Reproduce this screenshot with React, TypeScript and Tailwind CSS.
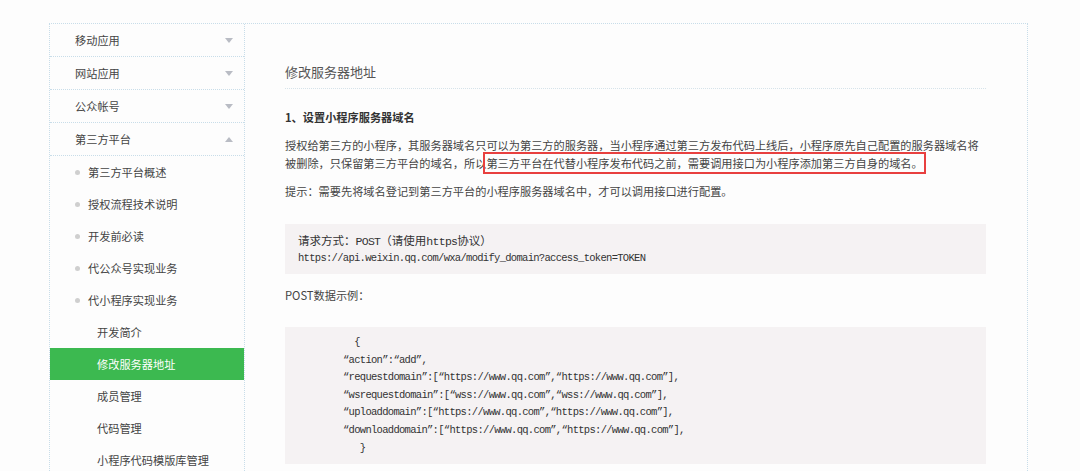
const font = { fontFamily: '"Noto Sans CJK SC", "Noto Sans", sans-serif' }

function Chevron({ up }: { up?: boolean }) {
  return (
    <svg width="8" height="5" viewBox="0 0 8 5" className="text-[#b9bcc4]">
      {up ? <path d="M0 5 L4 0 L8 5 Z" fill="currentColor" /> : <path d="M0 0 L8 0 L4 5 Z" fill="currentColor" />}
    </svg>
  )
}

const topItems = ["移动应用", "网站应用", "公众帐号"]
const subItems = ["第三方平台概述", "授权流程技术说明", "开发前必读", "代公众号实现业务", "代小程序实现业务"]
const nested = ["开发简介", "修改服务器地址", "成员管理", "代码管理", "小程序代码模版库管理"]

const codeLines = [
  "  {",
  "“action”:“add”,",
  "“requestdomain”:[“https://www.qq.com”,“https://www.qq.com”],",
  "“wsrequestdomain”:[“wss://www.qq.com”,“wss://www.qq.com”],",
  "“uploaddomain”:[“https://www.qq.com”,“https://www.qq.com”],",
  "“downloaddomain”:[“https://www.qq.com”,“https://www.qq.com”],",
  "   }",
]

function Sidebar() {
  return (
    <div className="w-[196px] shrink-0 border-x border-dotted border-[#c8dde9] text-[11.2px] text-[#444]">
      {topItems.map((t) => (
        <div key={t} className="flex h-[33px] items-center justify-between border-b border-dotted border-[#c8dde9] pl-[25px] pr-[11px]">
          <span>{t}</span>
          <Chevron />
        </div>
      ))}
      <div className="flex h-[33px] items-center justify-between border-b border-dotted border-[#c8dde9] pl-[25px] pr-[11px]">
        <span>第三方平台</span>
        <Chevron up />
      </div>
      {subItems.map((t) => (
        <div key={t} className="flex h-8 items-center gap-2 pl-[25px]">
          <span className="h-[5px] w-[5px] rounded-full bg-[#cfcfcf]" />
          <span>{t}</span>
        </div>
      ))}
      {nested.map((t) => (
        <div
          key={t}
          className={
            t === "修改服务器地址"
              ? "flex h-8 items-center bg-[#3cb950] pl-[47px] text-white"
              : "flex h-8 items-center pl-[47px]"
          }
        >
          {t}
        </div>
      ))}
    </div>
  )
}

function Main() {
  return (
    <div className="flex-1 pl-10 pr-[41px] pt-[38px] text-[11.2px] text-[#444]">
      <div className="border-b border-dotted border-[#d6e3ea] pb-[6px]">
        <h1 className="text-[13px] leading-5 text-[#555]">修改服务器地址</h1>
      </div>
      <h2 className="mt-[19px] font-bold leading-[18px] text-[#333]">1、设置小程序服务器域名</h2>
      <p className="mt-[10px] leading-[18px]">
        授权给第三方的小程序，其服务器域名只可以为第三方的服务器，当小程序通过第三方发布代码上线后，小程序原先自己配置的服务器域名将被删除，只保留第三方平台的域名，所以
        <span className="outline-2 outline-[#e8403f] outline-offset-[1px]">
          第三方平台在代替小程序发布代码之前，需要调用接口为小程序添加第三方自身的域名。
        </span>
      </p>
      <p className="mt-[10px] leading-[18px]">提示：需要先将域名登记到第三方平台的小程序服务器域名中，才可以调用接口进行配置。</p>
      <div className="mt-6 h-[50px] bg-[#f5f2f3] pl-[13px] pt-2 text-[#333]">
        <div className="text-[11.5px] leading-[17px]">
          请求方式：<span style={{ fontFamily: '"Liberation Mono", monospace' }} className="tracking-[-0.7px]">POST</span>（请使用<span style={{ fontFamily: '"Liberation Mono", monospace' }} className="tracking-[-0.7px]">https</span>协议）
        </div>
        <div style={{ fontFamily: '"Liberation Mono", monospace' }} className="text-[10.5px] leading-[17px] tracking-[-0.7px]">
          https://api.weixin.qq.com/wxa/modify_domain?access_token=TOKEN
        </div>
      </div>
      <p className="mt-3 leading-[18px]">POST数据示例：</p>
      <div className="mt-[23px] h-[137px] bg-[#f5f2f3] pl-[58px] pt-[7px] text-[#333]">
        {codeLines.map((l, i) => (
          <div
            key={i}
            style={{ fontFamily: '"Liberation Mono", monospace' }}
            className="whitespace-pre text-[10.5px] leading-[17.6px] tracking-[-0.7px]"
          >
            {l}
          </div>
        ))}
      </div>
    </div>
  )
}

export default function App() {
  return (
    <div style={font} className="h-[471px] overflow-hidden bg-[#fdfdfd] pl-[49px] pt-[23px]">
      <div className="flex h-[460px] w-[979px] border-t border-r border-dotted border-[#c8dde9]">
        <Sidebar />
        <Main />
      </div>
    </div>
  )
}
